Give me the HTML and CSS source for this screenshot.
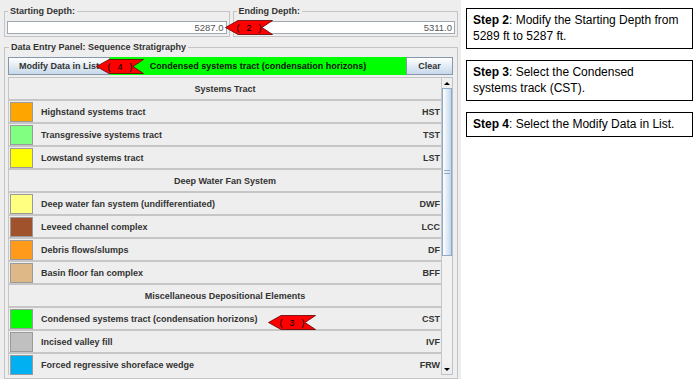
FILE: index.html
```html
<!DOCTYPE html>
<html lang="en">
<head>
    <meta charset="UTF-8">
    <title>Sequence Stratigraphy Entry</title>
    <link rel="stylesheet" href="styles.css">
</head>
<body>
    <div class="app">
        <div class="depths">
            <fieldset class="group">
                <legend>Starting Depth:</legend>
                <div class="field">5287.0</div>
            </fieldset>
            <fieldset class="group">
                <legend>Ending Depth:</legend>
                <div class="field">5311.0</div>
            </fieldset>
        </div>

        <fieldset class="group entry">
            <legend>Data Entry Panel: Sequence Stratigraphy</legend>
            <div class="toolbar">
                <div class="btn btn-modify">Modify Data in List</div>
                <div class="current">Condensed systems tract (condensation horizons)</div>
                <div class="btn btn-clear">Clear</div>
            </div>

            <div class="list">
                <div class="rows">
                    <div class="row section">Systems Tract</div>
                    <div class="row"><span class="swatch hst"></span><span class="label">Highstand systems tract</span><span class="code">HST</span></div>
                    <div class="row"><span class="swatch tst"></span><span class="label">Transgressive systems tract</span><span class="code">TST</span></div>
                    <div class="row"><span class="swatch lst"></span><span class="label">Lowstand systems tract</span><span class="code">LST</span></div>
                    <div class="row section">Deep Water Fan System</div>
                    <div class="row"><span class="swatch dwf"></span><span class="label">Deep water fan system (undifferentiated)</span><span class="code">DWF</span></div>
                    <div class="row"><span class="swatch lcc"></span><span class="label">Leveed channel complex</span><span class="code">LCC</span></div>
                    <div class="row"><span class="swatch df"></span><span class="label">Debris flows/slumps</span><span class="code">DF</span></div>
                    <div class="row"><span class="swatch bff"></span><span class="label">Basin floor fan complex</span><span class="code">BFF</span></div>
                    <div class="row section">Miscellaneous Depositional Elements</div>
                    <div class="row"><span class="swatch cst"></span><span class="label">Condensed systems tract (condensation horizons)</span><span class="code">CST</span></div>
                    <div class="row"><span class="swatch ivf"></span><span class="label">Incised valley fill</span><span class="code">IVF</span></div>
                    <div class="row"><span class="swatch frw"></span><span class="label">Forced regressive shoreface wedge</span><span class="code">FRW</span></div>
                </div>
                <div class="scrollbar">
                    <div class="scroll-btn"><span class="tri-up"></span></div>
                    <div class="thumb"><span class="grip"></span></div>
                    <div class="track"></div>
                    <div class="scroll-btn"><span class="tri-down"></span></div>
                </div>
            </div>
        </fieldset>

        <!-- step markers -->
        <svg class="marker marker-2" viewBox="0 0 48 15">
            <polygon points="0.5,7.5 13,0.5 47.5,0.5 37,7.5 47.5,14.5 13,14.5"/>
            <text x="24" y="10.5">(&#160;2&#160;)</text>
        </svg>
        <svg class="marker marker-4" viewBox="0 0 48 15">
            <polygon points="0.5,7.5 13,0.5 47.5,0.5 37,7.5 47.5,14.5 13,14.5"/>
            <text x="24" y="10.5">(&#160;4&#160;)</text>
        </svg>
        <svg class="marker marker-3" viewBox="0 0 48 15">
            <polygon points="0.5,7.5 13,0.5 47.5,0.5 37,7.5 47.5,14.5 13,14.5"/>
            <text x="24" y="10.5">(&#160;3&#160;)</text>
        </svg>
    </div>

    <div class="steps">
        <div class="step"><b>Step 2</b>: Modify the Starting Depth from<br>5289 ft to 5287 ft.</div>
        <div class="step"><b>Step 3</b>: Select the Condensed<br>systems track (CST).</div>
        <div class="step"><b>Step 4</b>: Select the Modify Data in List.</div>
    </div>
</body>
</html>
```

FILE: styles.css
```css
/* Global Styles */
* {
    box-sizing: border-box;
}

body {
    margin: 0;
    font-family: 'Liberation Sans', Arial, sans-serif;
    background: #ffffff;
    display: flex;
    height: 379px;
    overflow: hidden;
}

.app {
    position: relative;
    width: 461px;
    background: #eeeeee;
    padding: 5px 3px 0 4px;
    display: flex;
    flex-direction: column;
}

.depths {
    display: flex;
    gap: 3px;
}

.group {
    flex: 1;
    min-width: 0;
    margin: 0;
    padding: 4px 2px 2px;
    border: 1px solid #c4c4c4;
}

    .group legend {
        padding: 0 2px;
        margin-left: 1px;
        font-size: 9px;
        line-height: 12px;
        font-weight: bold;
        color: #333;
    }

.field {
    height: 13px;
    background: #fff;
    border: 1px solid #9ea9b4;
    padding-right: 2px;
    font-size: 9.5px;
    line-height: 11px;
    text-align: right;
    color: #555;
}

.entry {
    margin-top: 4px;
    padding: 4px 4px 0 3px;
}

.toolbar {
    display: flex;
    height: 18px;
}

.btn {
    display: flex;
    align-items: center;
    justify-content: center;
    background: linear-gradient(#ffffff, #c6d8ea);
    border: 1px solid #8497ab;
    font-size: 9px;
    font-weight: bold;
    color: #333;
}

.btn-modify {
    width: 102px;
}

.btn-clear {
    width: 47px;
}

.current {
    flex: 1;
    display: flex;
    align-items: center;
    justify-content: center;
    background: #00ff00;
    font-size: 9px;
    font-weight: bold;
    color: #111;
}

.list {
    display: flex;
    height: 298px;
    margin-top: 2px;
}

.rows {
    flex: 1;
    overflow: hidden;
}

.row {
    display: flex;
    align-items: center;
    height: 23px;
    border: 1px solid #c6c6c6;
    background: #eeeeee;
    font-size: 9px;
    font-weight: bold;
    color: #333;
}

    .row.section {
        justify-content: center;
    }

.swatch {
    width: 23px;
    height: 20px;
    margin-left: 1px;
    border: 1px solid #9a9a9a;
}

.label {
    margin-left: 8px;
}

.code {
    margin-left: auto;
    padding-right: 1px;
}

.hst { background: #ffa500; }
.tst { background: #80ff80; }
.lst { background: #ffff00; }
.dwf { background: #ffff80; }
.lcc { background: #a0522d; }
.df  { background: #ff9a1a; }
.bff { background: #deb887; }
.cst { background: #00ff00; }
.ivf { background: #c0c0c0; }
.frw { background: #00b0f0; }

.scrollbar {
    width: 11px;
    display: flex;
    flex-direction: column;
    border: 1px solid #b9c4cf;
    border-left: none;
    background: #f2f2f2;
}

.scroll-btn {
    height: 10px;
    display: flex;
    align-items: center;
    justify-content: center;
    background: #eeeeee;
}

.tri-up {
    border-left: 3px solid transparent;
    border-right: 3px solid transparent;
    border-bottom: 3px solid #000;
}

.tri-down {
    border-left: 3px solid transparent;
    border-right: 3px solid transparent;
    border-top: 3px solid #000;
}

.thumb {
    height: 168px;
    display: flex;
    align-items: center;
    justify-content: center;
    background: linear-gradient(to right, #ffffff, #c3d6ea);
    border: 1px solid #8ea9c6;
}

.grip {
    width: 6px;
    height: 4px;
    border-top: 1px solid #8ea9c6;
    border-bottom: 1px solid #8ea9c6;
}

.track {
    flex: 1;
}

/* red step markers laid over the form */
.marker {
    position: absolute;
    width: 48px;
    height: 15px;
}

    .marker polygon {
        fill: #ff0000;
        stroke: #600000;
        stroke-width: 0.8;
    }

    .marker text {
        font-family: 'Liberation Mono', 'DejaVu Sans Mono', monospace;
        font-size: 9px;
        text-anchor: middle;
        fill: #000;
    }

.marker-2 {
    left: 225px;
    top: 20px;
}

.marker-4 {
    left: 96px;
    top: 59px;
}

.marker-3 {
    left: 268px;
    top: 315px;
}

.steps {
    width: 232px;
    padding: 8px 0 0 5px;
    display: flex;
    flex-direction: column;
    gap: 11px;
}

.step {
    border: 1px solid #000;
    padding: 3px 6px 4px;
    font-size: 12px;
    line-height: 16px;
    color: #000;
}
```
